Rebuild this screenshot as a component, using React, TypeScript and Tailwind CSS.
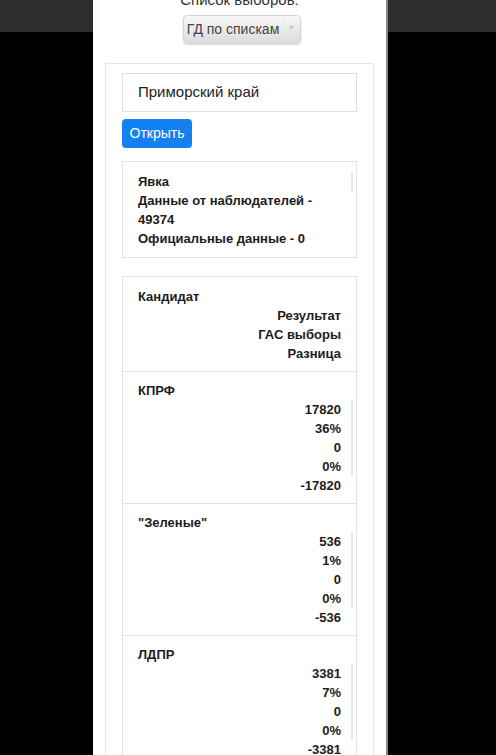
import React from 'react';

const font = { fontFamily: '"Liberation Sans", Arial, Helvetica, sans-serif' };

const candidates = [
  { name: 'КПРФ', values: ['17820', '36%', '0', '0%', '-17820'] },
  { name: '"Зеленые"', values: ['536', '1%', '0', '0%', '-536'] },
  { name: 'ЛДПР', values: ['3381', '7%', '0', '0%', '-3381'] },
];

function ScrollLine({ lines }: { lines: number }) {
  return (
    <span
      className="absolute right-[-12px] top-0 w-[2px] bg-[#e8e8e8]"
      style={{ height: lines * 19 }}
    />
  );
}

export default function App() {
  return (
    <div
      className="min-h-[755px] h-[755px] overflow-hidden bg-[linear-gradient(to_bottom,#2e2e2e_32px,#000000_32px)]"
      style={font}
    >
      <div className="ml-[93px] w-[295px] h-[755px] bg-white border-r-2 border-[#8a8a8a] overflow-hidden">
        {/* Election list selector */}
        <div className="flex flex-col items-center">
          <p className="mt-[-10px] text-[15px] leading-[20px] text-[#333]">Список выборов:</p>
          <div className="mt-[5px] ml-[4px] flex h-[29px] w-[118px] rounded-[4px] border border-[#d4d4d4] bg-gradient-to-b from-[#f7f7f7] to-[#dcdcdc] shadow-[0_1px_2px_rgba(0,0,0,0.15)]">
            <div className="flex flex-1 items-center justify-center text-[14px] text-[#444]">ГД по спискам</div>
            <div className="flex w-[17px] items-start justify-center border-l border-[#e8e8e8] pt-[7px] text-[7px] text-[#c4c4c4]">▼</div>
          </div>
        </div>

        {/* Main panel */}
        <div className="mx-[12px] mt-[19px] border border-[#e8e8e8] px-[16px] pt-[9px] pb-[20px]">
          <div className="flex h-[39px] items-center border border-[#dedede] px-[15px] text-[15px] text-[#222]">
            Приморский край
          </div>
          <button className="mt-[7px] flex h-[29px] w-[70px] items-center justify-center rounded-[4px] bg-[#1580f2] text-[14px] text-white">
            Открыть
          </button>

          {/* Turnout */}
          <div className="mt-[13px] border border-[#e2e2e2] px-[15px] pt-[10px] pb-[9px] text-[13px] font-bold leading-[19px] text-[#1c1c1c]">
            <div className="relative">
              <ScrollLine lines={1} />
              Явка
            </div>
            <div>Данные от наблюдателей -</div>
            <div>49374</div>
            <div>Официальные данные - 0</div>
          </div>

          {/* Results */}
          <div className="mt-[18px] border border-[#e2e2e2] text-[13px] font-bold leading-[19px] text-[#1c1c1c]">
            <div className="px-[15px] pt-[10px] pb-[8px]">
              <div>Кандидат</div>
              <div className="text-right">Результат</div>
              <div className="text-right">ГАС выборы</div>
              <div className="text-right">Разница</div>
            </div>
            {candidates.map((c) => (
              <div key={c.name} className="border-t border-[#e2e2e2] px-[15px] pt-[9px] pb-[8px]">
                <div>{c.name}</div>
                <div className="relative text-right">
                  <ScrollLine lines={4} />
                  {c.values.map((v, i) => (
                    <div key={i}>{v}</div>
                  ))}
                </div>
              </div>
            ))}
          </div>
        </div>
      </div>
    </div>
  );
}
